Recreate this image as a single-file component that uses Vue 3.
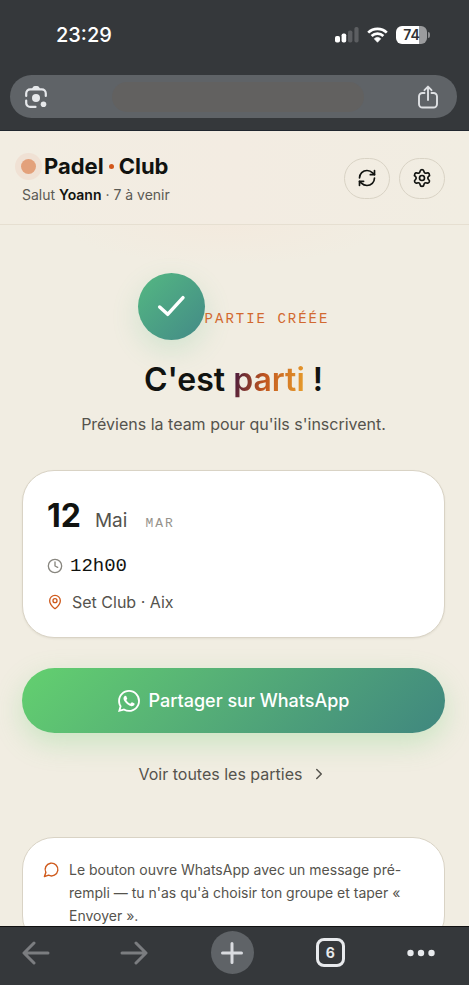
<script setup>
const user = 'Yoann'
const upcoming = 7
const match = { day: '12', month: 'Mai', weekday: 'MAR', time: '12h00', place: 'Set Club · Aix' }
const tabCount = 6
</script>

<template>
  <div class="phone">
    <div class="chrome-top">
      <div class="status">
        <span class="clock">23:29</span>
        <div class="indicators">
          <svg width="24" height="16" viewBox="0 0 24 16" aria-hidden="true">
            <rect x="0" y="9" width="5" height="6.5" rx="1.8" fill="#fff" />
            <rect x="6.6" y="6.5" width="4.6" height="9" rx="1.8" fill="#fff" />
            <rect x="13" y="3.5" width="4.4" height="12" rx="1.8" fill="#5c5e61" />
            <rect x="19.4" y="0" width="4.2" height="15.5" rx="1.8" fill="#5c5e61" />
          </svg>
          <svg width="21" height="16" viewBox="0 0 21 16" aria-hidden="true">
            <g fill="none" stroke="#fff" stroke-width="2.7">
              <path d="M1.2 5.6a13.3 13.3 0 0 1 18.6 0" />
              <path d="M4.6 9a8.5 8.5 0 0 1 11.8 0" />
            </g>
            <path d="M7.2 11.8a4.8 4.8 0 0 1 6.6 0L10.5 15.3z" fill="#fff" stroke="#fff" stroke-width=".6" stroke-linejoin="round" />
          </svg>
          <span class="battery"><span class="level">74</span></span>
        </div>
      </div>
      <div class="urlbar">
        <button class="bar-btn" aria-label="Recherche visuelle">
          <svg width="24" height="24" viewBox="0 0 24 24" aria-hidden="true">
            <g fill="none" stroke="#e6e8eb" stroke-width="2.2" stroke-linecap="round">
              <path d="M2.2 11V8.4a4 4 0 0 1 4-4h11.6a4 4 0 0 1 4 4V11" />
              <path d="M2.2 15.5v2.4a4 4 0 0 0 4 4H11.5" />
            </g>
            <path d="M7.5 4.5 9 2Q9.600 1 11 1h2Q14.400 1 15 2l1.500 2.500z" fill="#e6e8eb" />
            <circle cx="12" cy="13" r="4" fill="#e6e8eb" />
            <circle cx="19.500" cy="19.300" r="2.800" fill="#e6e8eb" />
          </svg>
        </button>
        <span class="address"></span>
        <button class="bar-btn" aria-label="Partager la page">
          <svg width="22" height="24" viewBox="0 0 22 24" fill="none" stroke="#dfe1e4" stroke-width="1.9" stroke-linecap="round" stroke-linejoin="round" aria-hidden="true">
            <path d="M7.500 8H5.500A3.500 3.500 0 0 0 2 11.500v7.500A3.500 3.500 0 0 0 5.500 22.500h11a3.500 3.500 0 0 0 3.500-3.500v-7.500A3.500 3.500 0 0 0 16.500 8H14.500" />
            <path d="M11 15V1.800M7.500 5.200 11 1.600l3.500 3.600" />
          </svg>
        </button>
      </div>
    </div>

    <div class="page">
      <header class="app-head">
        <div class="brand">
          <div class="name"><span class="ball"></span><span>Padel</span><span class="sep"></span><span>Club</span></div>
          <p class="hello">Salut <strong>{{ user }}</strong> · {{ upcoming }} à venir</p>
        </div>
        <div class="actions">
          <button class="round" aria-label="Actualiser">
            <svg class="ic" width="20" height="20" viewBox="0 0 24 24" aria-hidden="true">
              <path d="M3 12a9 9 0 0 1 9-9 9.750 9.750 0 0 1 6.740 2.740L21 8" /><path d="M21 3v5h-5" />
              <path d="M21 12a9 9 0 0 1-9 9 9.750 9.750 0 0 1-6.740-2.740L3 16" /><path d="M8 16H3v5" />
            </svg>
          </button>
          <button class="round" aria-label="Réglages">
            <svg class="ic" width="20" height="20" viewBox="0 0 24 24" aria-hidden="true">
              <path d="M9.671 4.136a2.340 2.340 0 0 1 4.659 0 2.340 2.340 0 0 0 3.319 1.915 2.340 2.340 0 0 1 2.330 4.033 2.340 2.340 0 0 0 0 3.831 2.340 2.340 0 0 1-2.330 4.033 2.340 2.340 0 0 0-3.319 1.915 2.340 2.340 0 0 1-4.659 0 2.340 2.340 0 0 0-3.320-1.915 2.340 2.340 0 0 1-2.330-4.033 2.340 2.340 0 0 0 0-3.831A2.340 2.340 0 0 1 6.350 6.051a2.340 2.340 0 0 0 3.319-1.915" />
              <circle cx="12" cy="12" r="3" />
            </svg>
          </button>
        </div>
      </header>

      <main class="content">
        <section class="hero">
          <div class="badge-row">
            <span class="check">
              <svg width="32" height="32" viewBox="0 0 24 24" fill="none" stroke="#fff" stroke-width="2.600" stroke-linecap="round" stroke-linejoin="round" aria-hidden="true"><path d="M21 5 9.500 17.500l-6-5.500" /></svg>
            </span>
            <span class="eyebrow">PARTIE CRÉÉE</span>
          </div>
          <h1>C'est <span class="grad">parti</span> !</h1>
          <p class="lead">Préviens la team pour qu'ils s'inscrivent.</p>
        </section>

        <section class="card">
          <div class="date">
            <span class="day">{{ match.day }}</span>
            <span class="month">{{ match.month }}</span>
            <span class="weekday">{{ match.weekday }}</span>
          </div>
          <div class="row time">
            <svg class="ic grey" width="16" height="16" viewBox="0 0 24 24" aria-hidden="true"><circle cx="12" cy="12" r="10" /><path d="M12 6v6l4 2" /></svg>
            <span>{{ match.time }}</span>
          </div>
          <div class="row place">
            <svg class="ic orange" width="16" height="16" viewBox="0 0 24 24" aria-hidden="true"><path d="M20 10c0 4.993-5.539 10.193-7.399 11.799a1 1 0 0 1-1.202 0C9.539 20.193 4 14.993 4 10a8 8 0 0 1 16 0" /><circle cx="12" cy="10" r="3" /></svg>
            <span>{{ match.place }}</span>
          </div>
        </section>

        <button class="share">
          <svg width="22" height="22" viewBox="0 0 24 24" fill="currentColor" aria-hidden="true">
            <path d="M17.472 14.382c-.297-.149-1.758-.867-2.030-.967-.273-.099-.471-.148-.670.150-.197.297-.767.966-.940 1.164-.173.199-.347.223-.644.075-.297-.150-1.255-.463-2.390-1.475-.883-.788-1.480-1.761-1.653-2.059-.173-.297-.018-.458.130-.606.134-.133.298-.347.446-.520.149-.174.198-.298.298-.497.099-.198.050-.371-.025-.520-.075-.149-.669-1.612-.916-2.207-.242-.579-.487-.500-.669-.510-.173-.008-.371-.010-.570-.010-.198 0-.520.074-.792.372-.272.297-1.040 1.016-1.040 2.479 0 1.462 1.065 2.875 1.213 3.074.149.198 2.096 3.200 5.077 4.487.709.306 1.262.489 1.694.625.712.227 1.360.195 1.871.118.571-.085 1.758-.719 2.006-1.413.248-.694.248-1.289.173-1.413-.074-.124-.272-.198-.570-.347m-5.421 7.403h-.004a9.870 9.870 0 0 1-5.031-1.378l-.361-.214-3.741.982.998-3.648-.235-.374a9.860 9.860 0 0 1-1.510-5.260c.001-5.450 4.436-9.884 9.888-9.884 2.640 0 5.122 1.030 6.988 2.898a9.825 9.825 0 0 1 2.893 6.994c-.003 5.450-4.437 9.884-9.885 9.884m8.413-18.297A11.815 11.815 0 0 0 12.050 0C5.495 0 .160 5.335.157 11.892c0 2.096.547 4.142 1.588 5.945L.057 24l6.305-1.654a11.882 11.882 0 0 0 5.683 1.448h.005c6.554 0 11.890-5.335 11.893-11.893a11.821 11.821 0 0 0-3.480-8.413z" />
          </svg>
          <span>Partager sur WhatsApp</span>
        </button>

        <a class="all" href="#parties">
          <span>Voir toutes les parties</span>
          <svg class="ic" width="18" height="18" viewBox="0 0 24 24" aria-hidden="true"><path d="m9 18 6-6-6-6" /></svg>
        </a>

        <aside class="note">
          <svg class="ic orange" width="17" height="17" viewBox="0 0 24 24" aria-hidden="true"><path d="M7.900 20A9 9 0 1 0 4 16.100L2 22Z" /></svg>
          <p>Le bouton ouvre WhatsApp avec un message pré-rempli — tu n'as qu'à choisir ton groupe et taper « Envoyer ».</p>
        </aside>
      </main>
    </div>

    <nav class="chrome-bottom">
      <button class="back" aria-label="Page précédente"><svg width="28" height="24" viewBox="0 0 28 24" class="arrow" aria-hidden="true"><path d="M26 12H2.500M12 2 2 12l10 10" /></svg></button>
      <button aria-label="Page suivante"><svg width="28" height="24" viewBox="0 0 28 24" class="arrow" aria-hidden="true"><path d="M2 12h23.500M16 2l10 10-10 10" /></svg></button>
      <button class="plus" aria-label="Nouvel onglet"><svg width="22" height="22" viewBox="0 0 22 22" aria-hidden="true"><path d="M11 1.500v19M1.500 11h19" fill="none" stroke="#d9dbdf" stroke-width="3" stroke-linecap="round" /></svg></button>
      <button aria-label="Onglets"><span class="tabs">{{ tabCount }}</span></button>
      <button aria-label="Menu"><svg width="28" height="8" viewBox="0 0 28 8" fill="#e8eaed" aria-hidden="true"><circle cx="3.500" cy="4" r="3.200" /><circle cx="14" cy="4" r="3.200" /><circle cx="24.500" cy="4" r="3.200" /></svg></button>
    </nav>
  </div>
</template>

<style>
body {
  margin: 0;
  background: #f1ede2;
}
</style>

<style scoped>
* {
  box-sizing: border-box;
}
.phone {
  height: 100vh;
  display: flex;
  flex-direction: column;
  font-family: Inter, "Liberation Sans", sans-serif;
  color: #111310;
}
button {
  font: inherit;
  color: inherit;
  border: 0;
  padding: 0;
  background: none;
  display: flex;
  align-items: center;
  justify-content: center;
}
p,
h1 {
  margin: 0;
}
svg {
  display: block;
  flex: none;
}
.ic {
  fill: none;
  stroke: currentColor;
  stroke-width: 2;
  stroke-linecap: round;
  stroke-linejoin: round;
}
.grey {
  color: #88867f;
}
.orange {
  color: #cf5a1c;
}
.chrome-top {
  flex: none;
  padding: 0 12px 12px 10px;
  background: #35383b;
  border-bottom: 1px solid #20262e;
}
.status {
  height: 75px;
  padding: 0 30px 5px 46px;
  display: flex;
  align-items: center;
  justify-content: space-between;
  color: #fff;
}
.clock {
  font-size: 20px;
  font-weight: 500;
}
.indicators {
  display: flex;
  align-items: center;
  gap: 8px;
}
.battery {
  position: relative;
  width: 31px;
  height: 18px;
  border-radius: 6px;
  background: linear-gradient(90deg, #fff 74%, #9b9c9e 74%);
  display: flex;
  align-items: center;
  justify-content: center;
}
.battery::after {
  content: "";
  position: absolute;
  left: 32px;
  top: 6px;
  width: 2px;
  height: 6px;
  border-radius: 0 2px 2px 0;
  background: #8d8e90;
}
.level {
  color: #2f3235;
  font-size: 14px;
  line-height: 18px;
  font-weight: 600;
}
.urlbar {
  height: 43px;
  padding: 0 18px 0 14px;
  border-radius: 22px;
  background: #5f6367;
  display: flex;
  align-items: center;
  justify-content: space-between;
}
.address {
  flex: 0 1 252px;
  height: 30px;
  margin-left: 10px;
  border-radius: 15px;
  background: #626160;
}
.page {
  flex: 1;
  min-height: 0;
  overflow-y: auto;
  scrollbar-width: none;
  background: radial-gradient(ellipse 160px 40px at 48% 94px, #f3eade, rgba(243, 234, 222, 0)), #f1ede2;
}
.app-head {
  display: flex;
  align-items: center;
  justify-content: space-between;
  padding: 18px 24px 17px 21px;
  background: linear-gradient(90deg, #f2ede2, #f3ece2 50%, #f1ede2);
  border-bottom: 1px solid #e6dfd1;
}
.name {
  display: flex;
  align-items: center;
  line-height: 34px;
  font-size: 22px;
  font-weight: 700;
}
.ball {
  width: 15px;
  height: 15px;
  margin-right: 8px;
  border-radius: 50%;
  background: #e3a17b;
  box-shadow: 0 0 0 6px #f0e1d4;
}
.sep {
  width: 5px;
  height: 5px;
  margin: 0 5px;
  border-radius: 50%;
  background: #d2571a;
}
.hello {
  padding-left: 1px;
  font-size: 14px;
  line-height: 24px;
  color: #5b5a54;
}
.hello strong {
  font-weight: 600;
  color: #111310;
}
.actions {
  display: flex;
  gap: 9px;
}
.round {
  width: 46px;
  height: 41px;
  border: 1px solid #d9d3c5;
  border-radius: 21px;
}
.content {
  padding: 48px 24px 48px 22px;
}
.hero {
  text-align: center;
}
.badge-row {
  display: flex;
  justify-content: center;
  align-items: center;
}
.check {
  width: 67px;
  height: 67px;
  border-radius: 50%;
  background: linear-gradient(135deg, #54b882, #438a87);
  box-shadow: 0 10px 28px rgba(84, 190, 130, 0.2);
  display: flex;
  align-items: center;
  justify-content: center;
}
.eyebrow {
  padding-top: 24px;
  font-family: "Liberation Mono", monospace;
  font-size: 14px;
  line-height: 20px;
  letter-spacing: 2px;
  color: #d2682f;
}
h1 {
  margin-top: 18px;
  font-size: 32px;
  line-height: 44px;
  font-weight: 600;
}
.grad {
  background: linear-gradient(100deg, #3c1440, #c2571f 45%, #e9a02c);
  -webkit-background-clip: text;
  background-clip: text;
  color: transparent;
}
.lead {
  margin-top: 10px;
  font-size: 16px;
  line-height: 24px;
  color: #55534d;
}
.card {
  margin-top: 34px;
  padding: 25px 24px 23px;
  border: 1px solid #d9d3c5;
  border-radius: 32px;
  background: #fff;
  box-shadow: 0 1px 2px rgba(80, 70, 40, 0.08);
}
.date {
  display: flex;
  align-items: baseline;
  line-height: 40px;
}
.day {
  font-size: 32px;
  font-weight: 700;
}
.month {
  margin-left: 14px;
  font-size: 19px;
  color: #55534d;
}
.weekday {
  margin-left: 18px;
  font-family: "Liberation Mono", monospace;
  font-size: 13px;
  letter-spacing: 2px;
  color: #96938c;
}
.row {
  display: flex;
  align-items: center;
  line-height: 24px;
}
.time {
  margin-top: 10px;
  gap: 7px;
  font-family: "Liberation Mono", monospace;
  font-size: 19px;
}
.place {
  margin-top: 12px;
  gap: 9px;
  font-size: 16px;
  color: #55534d;
}
.share {
  width: 100%;
  height: 65px;
  margin-top: 30px;
  gap: 9px;
  border-radius: 33px;
  background: linear-gradient(135deg, #63d06f, #57b276 40%, #40877f);
  box-shadow: 0 10px 28px rgba(99, 208, 111, 0.28);
  color: #fff;
  font-size: 18px;
  font-weight: 500;
}
.all {
  display: flex;
  align-items: center;
  justify-content: center;
  margin-top: 29px;
  gap: 8px;
  font-size: 16px;
  line-height: 24px;
  color: #55534d;
  text-decoration: none;
}
.note {
  display: flex;
  gap: 9px;
  margin-top: 51px;
  padding: 20px 32px 20px 20px;
  border: 1px solid #d9d3c5;
  border-radius: 32px;
  background: #fff;
  font-size: 14px;
  line-height: 23px;
  color: #55534d;
}
.note svg {
  margin-top: 3px;
}
.chrome-bottom {
  flex: none;
  height: 59px;
  padding: 0 34px 7px 22px;
  border-top: 1px solid #111;
  background: #35383b;
  display: flex;
  align-items: center;
  justify-content: space-between;
}
.back {
  margin-right: 8px;
}
.arrow {
  fill: none;
  stroke: #7b7d80;
  stroke-width: 3;
  stroke-linecap: round;
  stroke-linejoin: round;
}
.plus {
  width: 43px;
  height: 43px;
  border-radius: 50%;
  background: #5f6367;
}
.tabs {
  width: 29px;
  height: 29px;
  border: 3px solid #e8eaed;
  border-radius: 8px;
  font-size: 14px;
  line-height: 23px;
  font-weight: 700;
  color: #e8eaed;
}
</style>
